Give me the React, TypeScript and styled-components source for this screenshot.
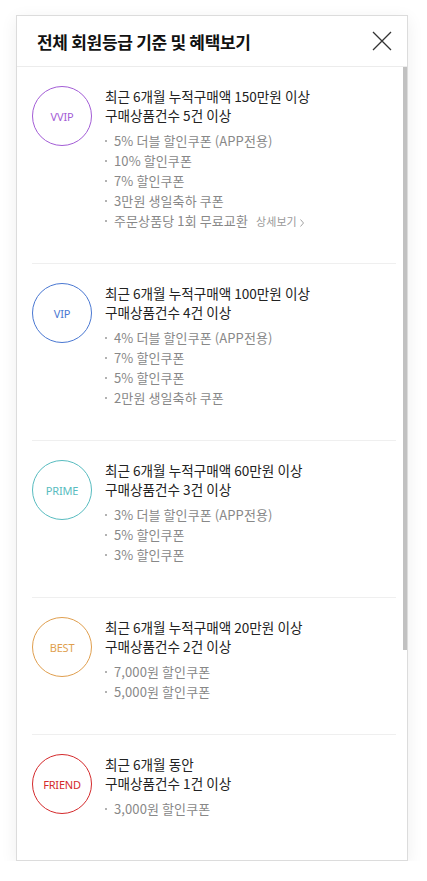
import styled, { createGlobalStyle } from 'styled-components';

interface Grade {
     name: string;
     color: string;
     condition: string[];
     benefits: string[];
     detail?: boolean;
}

const grades: Grade[] = [
     {
          name: 'VVIP',
          color: '#a35dd6',
          condition: ['최근 6개월 누적구매액 150만원 이상', '구매상품건수 5건 이상'],
          benefits: [
               '5% 더블 할인쿠폰 (APP전용)',
               '10% 할인쿠폰',
               '7% 할인쿠폰',
               '3만원 생일축하 쿠폰',
               '주문상품당 1회 무료교환',
          ],
          detail: true,
     },
     {
          name: 'VIP',
          color: '#4a78d2',
          condition: ['최근 6개월 누적구매액 100만원 이상', '구매상품건수 4건 이상'],
          benefits: [
               '4% 더블 할인쿠폰 (APP전용)',
               '7% 할인쿠폰',
               '5% 할인쿠폰',
               '2만원 생일축하 쿠폰',
          ],
     },
     {
          name: 'PRIME',
          color: '#58bcc0',
          condition: ['최근 6개월 누적구매액 60만원 이상', '구매상품건수 3건 이상'],
          benefits: ['3% 더블 할인쿠폰 (APP전용)', '5% 할인쿠폰', '3% 할인쿠폰'],
     },
     {
          name: 'BEST',
          color: '#e09f4f',
          condition: ['최근 6개월 누적구매액 20만원 이상', '구매상품건수 2건 이상'],
          benefits: ['7,000원 할인쿠폰', '5,000원 할인쿠폰'],
     },
     {
          name: 'FRIEND',
          color: '#d42a2c',
          condition: ['최근 6개월 동안', '구매상품건수 1건 이상'],
          benefits: ['3,000원 할인쿠폰'],
     },
];

const GlobalStyle = createGlobalStyle`
     html, body {
          margin: 0;
          padding: 0;
          background: #fff;
     }

     body {
          font-family: 'Noto Sans CJK KR', 'Noto Sans', sans-serif;
          -webkit-font-smoothing: antialiased;
     }
`;

const Page = styled.div`
     padding: 15px 0 0 16px;
`;

const Modal = styled.div`
     width: 390px;
     height: 844px;
     border: 1px solid #dcdcdc;
     background: #fff;
     box-shadow: 0 4px 16px rgba(0, 0, 0, 0.07);
     display: flex;
     flex-direction: column;
`;

const Header = styled.header`
     height: 50px;
     flex-shrink: 0;
     display: flex;
     align-items: center;
     justify-content: space-between;
     padding: 0 14px 0 20px;
     border-bottom: 1px solid #ececec;

     h1 {
          margin: 0;
          font-size: 17px;
          font-weight: 700;
          color: #111;
          letter-spacing: -0.3px;
     }
`;

const CloseButton = styled.button`
     width: 22px;
     height: 22px;
     padding: 0;
     border: none;
     background: none;
     cursor: pointer;
     display: flex;
     align-items: center;
     justify-content: center;
`;

const BodyWrap = styled.div`
     position: relative;
     flex: 1;
     min-height: 0;
`;

const Body = styled.div`
     height: 100%;
     overflow-y: auto;
     padding: 0 11px 0 15px;
     box-sizing: border-box;
     scrollbar-width: none;

     &::-webkit-scrollbar {
          display: none;
     }
`;

// drawn thumb, the headless browser hides native scrollbars
const ScrollThumb = styled.div`
     position: absolute;
     top: 0;
     right: 0;
     width: 4px;
     height: 583px;
     background: #c1c1c1;
     pointer-events: none;
`;

const GradeList = styled.ul`
     list-style: none;
     margin: 0;
     padding: 0 0 280px;
`;

const GradeRow = styled.li`
     display: flex;
     gap: 13px;
     padding: 19px 0 32px;
     border-bottom: 1px solid #efefef;

     &:last-child {
          border-bottom: none;
     }
`;

const Badge = styled.div<{ $color: string }>`
     width: 58px;
     height: 58px;
     flex-shrink: 0;
     border-radius: 50%;
     border: 1px solid ${(p) => p.$color};
     color: ${(p) => p.$color};
     display: flex;
     align-items: center;
     justify-content: center;
     font-family: 'Noto Sans', sans-serif;
     font-size: 11px;
     letter-spacing: -0.2px;
`;

const Info = styled.div`
     display: flex;
     flex-direction: column;
     gap: 6px;
     padding-top: 1px;
`;

const Condition = styled.p`
     margin: 0;
     font-size: 13.6px;
     line-height: 19px;
     color: #222;
`;

const Benefits = styled.ul`
     list-style: none;
     margin: 0;
     padding: 0;
`;

const Benefit = styled.li`
     position: relative;
     padding-left: 9px;
     font-size: 13px;
     line-height: 20px;
     color: #888;
     letter-spacing: 0.1px;

     &::before {
          content: '';
          position: absolute;
          left: 0;
          top: 9px;
          width: 2px;
          height: 2px;
          border-radius: 50%;
          background: #999;
     }
`;

const DetailLink = styled.a`
     margin-left: 8px;
     font-size: 11px;
     color: #999;
     text-decoration: none;
     cursor: pointer;

     svg {
          margin-left: 3px;
          vertical-align: -1px;
     }
`;

const App = () => {
     return (
          <Page>
               <GlobalStyle />
               <Modal>
                    <Header>
                         <h1>전체 회원등급 기준 및 혜택보기</h1>
                         <CloseButton aria-label='닫기'>
                              <svg width='20' height='20' viewBox='0 0 20 20'>
                                   <path
                                        d='M1 1L19 19M19 1L1 19'
                                        stroke='#333'
                                        strokeWidth='1.3'
                                        fill='none'
                                   />
                              </svg>
                         </CloseButton>
                    </Header>

                    <BodyWrap>
                         <Body>
                              <GradeList>
                                   {grades.map((grade) => (
                                        <GradeRow key={grade.name}>
                                             <Badge $color={grade.color}>{grade.name}</Badge>
                                             <Info>
                                                  <Condition>
                                                       {grade.condition[0]}
                                                       <br />
                                                       {grade.condition[1]}
                                                  </Condition>
                                                  <Benefits>
                                                       {grade.benefits.map((b, i) => (
                                                            <Benefit key={b}>
                                                                 {b}
                                                                 {grade.detail &&
                                                                      i === grade.benefits.length - 1 && (
                                                                           <DetailLink>
                                                                                상세보기
                                                                                <svg width='4' height='8' viewBox='0 0 4 8'>
                                                                                     <path
                                                                                          d='M0.5 0.5L3.5 4L0.5 7.5'
                                                                                          stroke='#999'
                                                                                          strokeWidth='0.9'
                                                                                          fill='none'
                                                                                     />
                                                                                </svg>
                                                                           </DetailLink>
                                                                      )}
                                                            </Benefit>
                                                       ))}
                                                  </Benefits>
                                             </Info>
                                        </GradeRow>
                                   ))}
                              </GradeList>
                         </Body>
                         <ScrollThumb />
                    </BodyWrap>
               </Modal>
          </Page>
     );
};

export default App;
